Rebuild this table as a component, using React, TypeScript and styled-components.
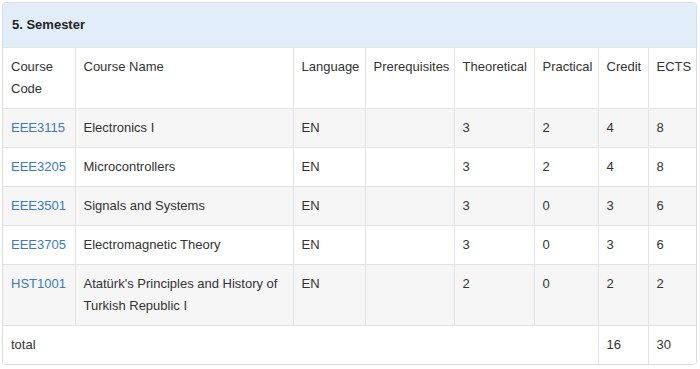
import { FC } from "react";
import styled, { createGlobalStyle } from "styled-components";

const GlobalStyle = createGlobalStyle`
  body {
    margin: 0;
    background: #ffffff;
    font-family: "Liberation Sans", Arial, sans-serif;
    color: #333333;
  }
`;

const Panel = styled.div`
  width: 695px;
  margin: 2px;
  box-sizing: border-box;
  border: 1px solid #dddddd;
  border-radius: 4px;
  overflow: hidden;
  background: #ffffff;
`;

const Heading = styled.div`
  padding: 11px 9px;
  background: #e1eef9;
  font-size: 13px;
  font-weight: 700;
  line-height: 22px;
  color: #222222;
`;

const Table = styled.table`
  width: 100%;
  border-collapse: collapse;
  table-layout: fixed;
  font-size: 13px;
  line-height: 22px;
`;

const Row = styled.tr<{ $striped?: boolean }>`
  background: ${(p) => (p.$striped ? "#f6f6f6" : "#ffffff")};
`;

const Cell = styled.td`
  padding: 8px;
  vertical-align: top;
  border-top: 1px solid #e3e3e3;
  border-left: 1px solid #e3e3e3;
  font-weight: 400;
  text-align: left;

  &:first-child {
    border-left: 0;
  }
`;

const CodeLink = styled.a`
  color: #3a7bbf;
  text-decoration: none;
`;

interface ICourse {
  code: string
  name: string
  lang: string
  theo: number
  prac: number
  credit: number
  ects: number
}

const courses: ICourse[] = [
  { code: "EEE3115", name: "Electronics I", lang: "EN", theo: 3, prac: 2, credit: 4, ects: 8 },
  { code: "EEE3205", name: "Microcontrollers", lang: "EN", theo: 3, prac: 2, credit: 4, ects: 8 },
  { code: "EEE3501", name: "Signals and Systems", lang: "EN", theo: 3, prac: 0, credit: 3, ects: 6 },
  { code: "EEE3705", name: "Electromagnetic Theory", lang: "EN", theo: 3, prac: 0, credit: 3, ects: 6 },
  { code: "HST1001", name: "Atatürk's Principles and History of Turkish Republic I", lang: "EN", theo: 2, prac: 0, credit: 2, ects: 2 },
];

const widths = [72, 218, 72, 89, 80, 64, 50, 48];

const App: FC = () => {
  return (
    <>
      <GlobalStyle />
      <Panel>
        <Heading>5. Semester</Heading>
        <Table>
          <colgroup>
            {widths.map((w, i) => (
              <col key={i} style={{ width: w }} />
            ))}
          </colgroup>
          <tbody>
            <Row>
              <Cell as="th">Course Code</Cell>
              <Cell as="th">Course Name</Cell>
              <Cell as="th">Language</Cell>
              <Cell as="th">Prerequisites</Cell>
              <Cell as="th">Theoretical</Cell>
              <Cell as="th">Practical</Cell>
              <Cell as="th">Credit</Cell>
              <Cell as="th">ECTS</Cell>
            </Row>
            {courses.map((c, i) => (
              <Row key={c.code} $striped={i % 2 === 0}>
                <Cell>
                  <CodeLink href="#">{c.code}</CodeLink>
                </Cell>
                <Cell>{c.name}</Cell>
                <Cell>{c.lang}</Cell>
                <Cell />
                <Cell>{c.theo}</Cell>
                <Cell>{c.prac}</Cell>
                <Cell>{c.credit}</Cell>
                <Cell>{c.ects}</Cell>
              </Row>
            ))}
            <Row>
              <Cell colSpan={6}>total</Cell>
              <Cell>16</Cell>
              <Cell>30</Cell>
            </Row>
          </tbody>
        </Table>
      </Panel>
    </>
  );
};

export default App;
